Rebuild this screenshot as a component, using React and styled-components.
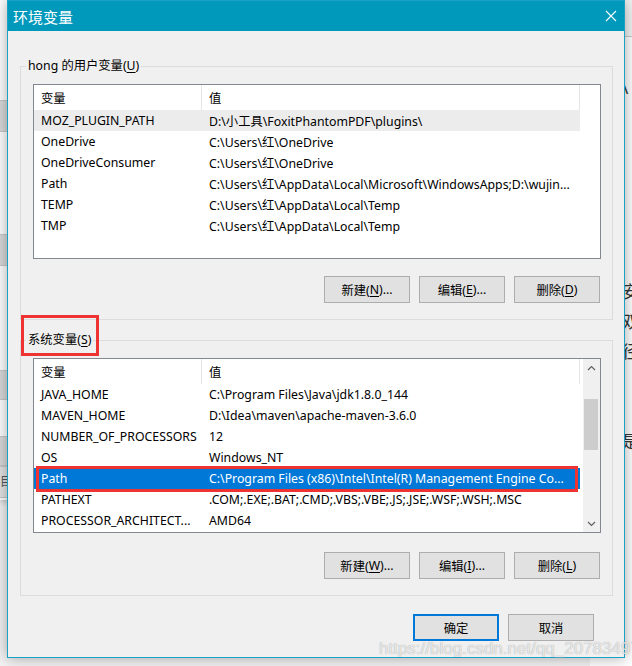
import React from "react"
import styled, { createGlobalStyle } from "styled-components"

const GlobalStyle = createGlobalStyle`
  html, body { margin: 0; padding: 0; }
  body {
    width: 632px;
    height: 666px;
    overflow: hidden;
    background: #f3f3f3;
    font-family: "Noto Sans", "Noto Sans CJK SC", sans-serif;
    font-size: 12px;
    color: #000;
  }
`

const Desktop = styled.div`
  position: relative;
  width: 632px;
  height: 666px;
  overflow: hidden;
`

const LeftBackWindow = styled.div`
  position: absolute;
  left: 0;
  top: 0;
  width: 40px;
  height: 500px;
  background: #fff;
  display: flex;
  flex-direction: column;
  box-shadow: 0 2px 6px rgba(0, 0, 0, 0.2);
`

const BackBlock = styled.div`
  height: ${(p) => p.$h}px;
  margin-top: ${(p) => p.$gap}px;
  background: ${(p) => p.$bg || "#dadada"};
  border-top: 1px solid #c8c8c8;
  border-bottom: 1px solid #c8c8c8;
  color: #555;
  font-size: 12px;
  line-height: ${(p) => p.$h}px;
  white-space: nowrap;
`

const RightBackWindow = styled.div`
  position: absolute;
  left: 590px;
  top: 36px;
  width: 60px;
  height: 640px;
  background: #fff;
  border-top: 1px solid #c8c8c8;
  display: flex;
  flex-direction: column;
  padding-left: 32px;
  box-sizing: border-box;
`

const BackGlyph = styled.div`
  margin-top: ${(p) => p.$gap}px;
  font-size: 17px;
  line-height: 22px;
  color: #333;
`

const Dialog = styled.div`
  position: absolute;
  left: 7px;
  top: 0;
  width: 618px;
  height: 658px;
  box-sizing: border-box;
  border: 1px solid #1ba1c5;
  background: #f0f0f0;
  display: flex;
  flex-direction: column;
  box-shadow: 0 0 14px rgba(0, 0, 0, 0.35);
`

const TitleBar = styled.div`
  height: 30px;
  background: #0099bc;
  color: #fff;
  display: flex;
  align-items: center;
  justify-content: space-between;
  padding-left: 5px;
  font-size: 15px;
`

const CloseBtn = styled.div`
  width: 26px;
  height: 30px;
  display: flex;
  align-items: center;
  justify-content: center;
`

const Body = styled.div`
  flex: 1;
  display: flex;
  flex-direction: column;
  padding: 27px 11px 16px 12px;
`

const Group = styled.fieldset`
  margin: ${(p) => p.$mt || 0}px 0 0 0;
  padding: 10px 11px 16px 12px;
  border: 1px solid #dcdcdc;
  display: flex;
  flex-direction: column;
  min-width: 0;
`

const Legend = styled.legend`
  position: relative;
  padding: 0 2px;
  margin-left: -7px;
  line-height: 16px;
  font-size: 12.3px;
`

const RedFrame = styled.span`
  position: absolute;
  left: -5px;
  right: -6px;
  top: -17px;
  bottom: -8px;
  border: 3px solid #ee3333;
`

const Key = styled.span`
  text-decoration: underline;
  text-underline-offset: 2px;
`

const ListBox = styled.div`
  height: 175px;
  box-sizing: border-box;
  border: 1px solid #828790;
  background: #fff;
  display: flex;
  font-size: 12.3px;
`

const Table = styled.div`
  flex: 1;
  display: flex;
  flex-direction: column;
`

const Row = styled.div`
  position: relative;
  display: grid;
  grid-template-columns: 168px 378px;
  height: ${(p) => (p.$header ? 25 : 21)}px;
  flex-shrink: 0;
  align-items: center;
  background: ${(p) => (p.$selected ? "#0078d7" : p.$muted ? "#ececec" : "transparent")};
  color: ${(p) => (p.$selected ? "#fff" : "#000")};
  width: 546px;
`

const Cell = styled.div`
  height: 100%;
  display: flex;
  align-items: center;
  padding-left: 7px;
  white-space: nowrap;
  overflow: hidden;
  box-sizing: border-box;
  border-right: ${(p) => (p.$header ? "1px solid #e5e5e5" : "none")};
`

const Annotation = styled.div`
  position: absolute;
  left: 2px;
  right: 2px;
  top: -2px;
  bottom: -3px;
  border: 3px solid #ee3333;
  box-sizing: border-box;
`

const ScrollBar = styled.div`
  width: 17px;
  background: #f0f0f0;
  display: flex;
  flex-direction: column;
`

const Arrow = styled.div`
  height: 17px;
  display: flex;
  align-items: center;
  justify-content: center;
`

const Thumb = styled.div`
  margin: 23px 2px 0 1px;
  height: 51px;
  background: #cdcdcd;
`

const Track = styled.div`
  flex: 1;
  display: flex;
  flex-direction: column;
`

const Filler = styled.div`
  width: 19px;
`

const ButtonRow = styled.div`
  display: flex;
  justify-content: flex-end;
  gap: 9px;
  margin-top: ${(p) => p.$mt}px;
  padding-right: ${(p) => p.$pr || 0}px;
`

const Btn = styled.div`
  width: 86px;
  height: 27px;
  box-sizing: border-box;
  border: ${(p) => (p.$primary ? "2px solid #0078d7" : "1px solid #adadad")};
  background: #e1e1e1;
  display: flex;
  align-items: center;
  justify-content: center;
  font-size: 12.3px;
`

const Watermark = styled.div`
  position: absolute;
  left: 371px;
  top: 638px;
  font-family: "Liberation Sans", Arial, sans-serif;
  font-size: 17px;
  line-height: 20px;
  color: rgba(255, 255, 255, 0.75);
  text-shadow: 0 0 1px rgba(0, 0, 0, 0.4);
  white-space: nowrap;
`

const userVars = [
  ["MOZ_PLUGIN_PATH", "D:\\小工具\\FoxitPhantomPDF\\plugins\\"],
  ["OneDrive", "C:\\Users\\红\\OneDrive"],
  ["OneDriveConsumer", "C:\\Users\\红\\OneDrive"],
  ["Path", "C:\\Users\\红\\AppData\\Local\\Microsoft\\WindowsApps;D:\\wujin..."],
  ["TEMP", "C:\\Users\\红\\AppData\\Local\\Temp"],
  ["TMP", "C:\\Users\\红\\AppData\\Local\\Temp"],
]

const sysVars = [
  ["JAVA_HOME", "C:\\Program Files\\Java\\jdk1.8.0_144"],
  ["MAVEN_HOME", "D:\\Idea\\maven\\apache-maven-3.6.0"],
  ["NUMBER_OF_PROCESSORS", "12"],
  ["OS", "Windows_NT"],
  ["Path", "C:\\Program Files (x86)\\Intel\\Intel(R) Management Engine Co..."],
  ["PATHEXT", ".COM;.EXE;.BAT;.CMD;.VBS;.VBE;.JS;.JSE;.WSF;.WSH;.MSC"],
  ["PROCESSOR_ARCHITECT...", "AMD64"],
]

function Chevron({ down }) {
  return (
    <svg width="9" height="6" viewBox="0 0 9 6">
      <path
        d={down ? "M1 1 L4.5 4.5 L8 1" : "M1 5 L4.5 1.5 L8 5"}
        fill="none"
        stroke="#606060"
        strokeWidth="1.2"
      />
    </svg>
  )
}

function VarList({ rows, muted, selected, scroll }) {
  return (
    <ListBox>
      <Table>
        <Row $header>
          <Cell $header>变量</Cell>
          <Cell $header>值</Cell>
        </Row>
        {rows.map(([name, value], i) => (
          <Row key={name + i} $muted={i === muted} $selected={i === selected}>
            <Cell>{name}</Cell>
            <Cell>{value}</Cell>
            {i === selected && <Annotation />}
          </Row>
        ))}
      </Table>
      {scroll ? (
        <ScrollBar>
          <Arrow>
            <Chevron />
          </Arrow>
          <Track>
            <Thumb />
          </Track>
          <Arrow>
            <Chevron down />
          </Arrow>
        </ScrollBar>
      ) : (
        <Filler />
      )}
    </ListBox>
  )
}

export default function App() {
  return (
    <>
      <GlobalStyle />
      <Desktop>
        <LeftBackWindow>
          <BackBlock $h={30} $gap={100} />
          <BackBlock $h={30} $gap={102} />
          <BackBlock $h={28} $gap={104} />
          <BackBlock $h={28} $gap={36} />
          <BackBlock $h={30} $gap={0} $bg="#e4e4e4">目(</BackBlock>
        </LeftBackWindow>
        <RightBackWindow>
          <BackGlyph $gap={40}>\</BackGlyph>
          <BackGlyph $gap={182}>安</BackGlyph>
          <BackGlyph $gap={8}>双</BackGlyph>
          <BackGlyph $gap={8}>径</BackGlyph>
          <BackGlyph $gap={68}>是</BackGlyph>
        </RightBackWindow>
        <Dialog>
          <TitleBar>
            <span>环境变量</span>
            <CloseBtn>
              <svg width="12" height="12" viewBox="0 0 12 12">
                <path d="M1 1 L11 11 M11 1 L1 11" stroke="#fff" strokeWidth="1.1" />
              </svg>
            </CloseBtn>
          </TitleBar>
          <Body>
            <Group>
              <Legend>
                hong 的用户变量(<Key>U</Key>)
              </Legend>
              <VarList rows={userVars} muted={0} />
              <ButtonRow $mt={17} $pr={1}>
                <Btn>
                  新建(<Key>N</Key>)...
                </Btn>
                <Btn>
                  编辑(<Key>E</Key>)...
                </Btn>
                <Btn>
                  删除(<Key>D</Key>)
                </Btn>
              </ButtonRow>
            </Group>
            <Group $mt={12}>
              <Legend>
                系统变量(<Key>S</Key>)
                <RedFrame />
              </Legend>
              <VarList rows={sysVars} selected={4} scroll />
              <ButtonRow $mt={19} $pr={1}>
                <Btn>
                  新建(<Key>W</Key>)...
                </Btn>
                <Btn>
                  编辑(<Key>I</Key>)...
                </Btn>
                <Btn>
                  删除(<Key>L</Key>)
                </Btn>
              </ButtonRow>
            </Group>
            <ButtonRow $mt={18} $pr={19}>
              <Btn $primary>确定</Btn>
              <Btn>取消</Btn>
            </ButtonRow>
          </Body>
          <Watermark>https://blog.csdn.net/qq_20783497</Watermark>
        </Dialog>
      </Desktop>
    </>
  )
}
